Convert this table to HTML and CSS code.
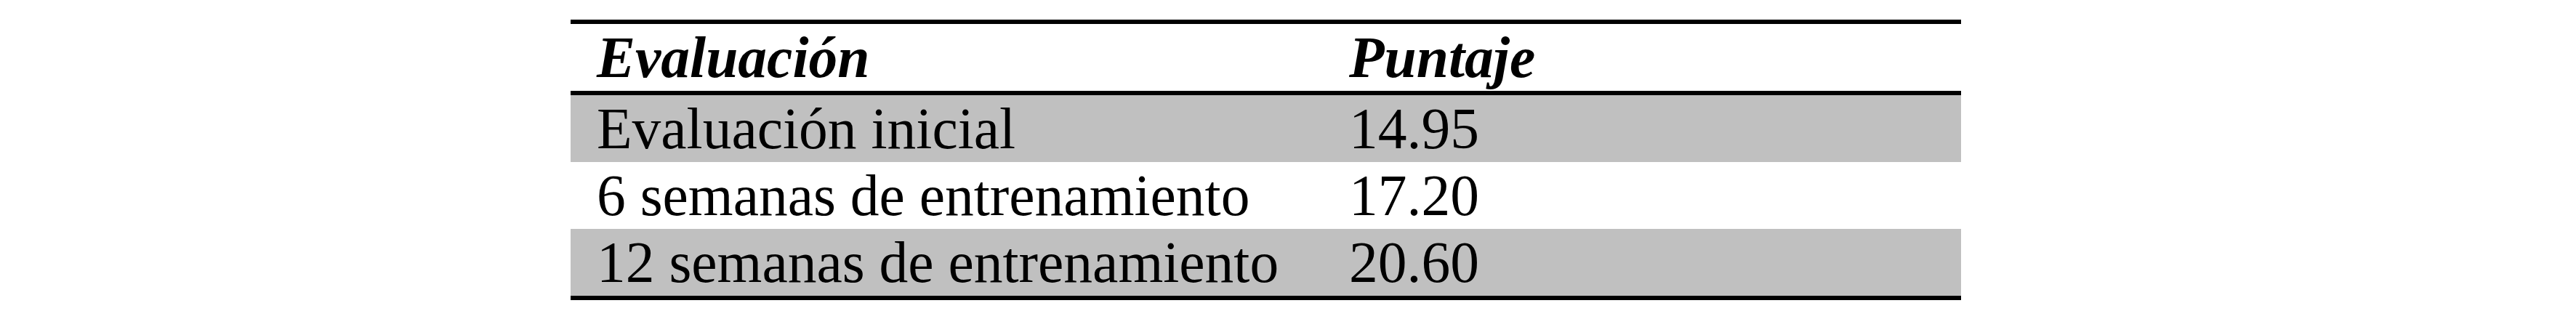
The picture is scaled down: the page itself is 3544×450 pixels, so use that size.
FILE: index.html
```html
<!DOCTYPE html>
<html lang="es">
<head>
<meta charset="utf-8">
<title>Tabla de evaluación</title>
<link rel="stylesheet" href="styles.css">
</head>
<body>
<div class="table">
  <div class="row head">
    <div class="cell">Evaluación</div>
    <div class="cell">Puntaje</div>
  </div>
  <div class="row shade">
    <div class="cell">Evaluación inicial</div>
    <div class="cell">14.95</div>
  </div>
  <div class="row">
    <div class="cell">6 semanas de entrenamiento</div>
    <div class="cell">17.20</div>
  </div>
  <div class="row shade">
    <div class="cell">12 semanas de entrenamiento</div>
    <div class="cell">20.60</div>
  </div>
</div>
</body>
</html>
```

FILE: styles.css
```css
html, body {
  margin: 0;
  padding: 0;
  background: #ffffff;
}

body {
  font-family: "Liberation Serif", "Times New Roman", serif;
  font-size: 79.5px;
  color: #000000;
}

.table {
  margin: 27px 0 0 785px;
  width: 1913px;
  border-top: 6px solid #000000;
  border-bottom: 6px solid #000000;
}

.row {
  display: grid;
  grid-template-columns: 1035px 1fr;
  height: 92px;
  line-height: 92px;
  white-space: nowrap;
}

.cell {
  padding-left: 36px;
}

.head {
  border-bottom: 6px solid #000000;
  font-weight: bold;
  font-style: italic;
}

.shade {
  background: #c0c0c0;
}
```
